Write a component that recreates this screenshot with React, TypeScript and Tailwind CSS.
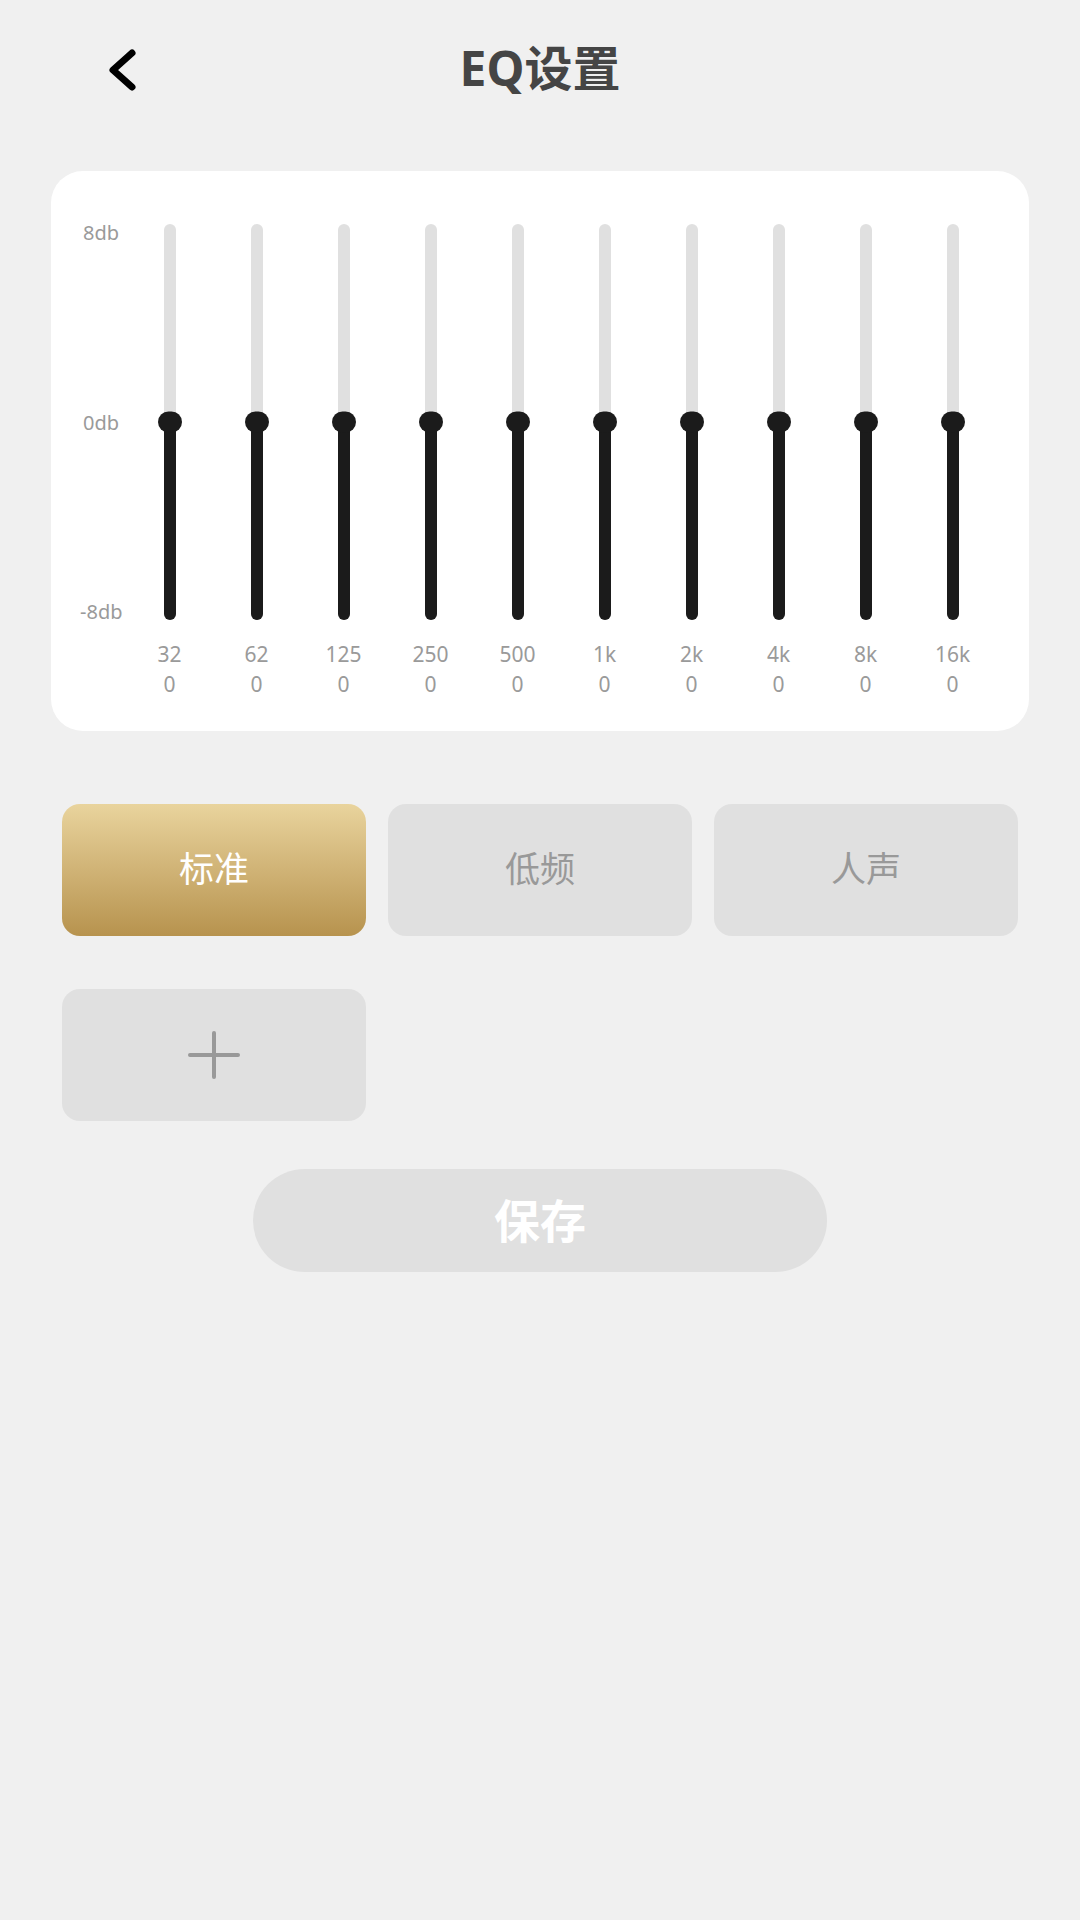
import React from "react";

const bands = ["32", "62", "125", "250", "500", "1k", "2k", "4k", "8k", "16k"];

function Slider({ label }: { label: string }) {
  return (
    <div className="flex w-[87px] flex-col items-center">
      <div className="relative mt-[3px] h-[396px] w-[12px] rounded-full bg-[#e0e0e0]">
        <div className="absolute bottom-0 left-0 h-1/2 w-full rounded-full bg-[#1b1b1b]" />
        <div className="absolute left-1/2 top-1/2 h-[21px] w-[24px] -translate-x-1/2 -translate-y-1/2 rounded-full bg-[#1b1b1b]" />
      </div>
      <div className="mt-[19px] text-center text-[21px] leading-[30px] text-[#9a9a9a]">
        <div>{label}</div>
        <div>0</div>
      </div>
    </div>
  );
}

export default function App() {
  return (
    <div
      className="min-h-[1920px] w-[1080px] bg-[#f0f0f0]"
      style={{ fontFamily: '"Noto Sans", "Noto Sans CJK SC", sans-serif' }}
    >
      {/* header */}
      <div className="relative flex h-[136px] items-center justify-center">
        <button className="absolute left-[100px] top-[44px] p-0">
          <svg width="44" height="50" viewBox="0 0 44 50" fill="none">
            <path d="M32 9 L13 26 L32 43" stroke="#000" strokeWidth="7" strokeLinecap="round" strokeLinejoin="round" />
          </svg>
        </button>
        <h1 className="text-[48px] font-bold leading-none text-[#454545]">EQ设置</h1>
      </div>

      {/* eq card */}
      <div className="mx-[51px] mt-[35px] flex h-[560px] rounded-[32px] bg-white pt-[50px]">
        <div className="flex h-[403px] w-[75px] flex-col justify-between pl-[32px] text-[20px] leading-[24px] text-[#9a9a9a]">
          <span>8db</span>
          <span>0db</span>
          <span className="-ml-[3px]">-8db</span>
        </div>
        <div className="flex">
          {bands.map((b) => (
            <Slider key={b} label={b} />
          ))}
        </div>
      </div>

      {/* presets */}
      <div className="mt-[73px] grid grid-cols-3 gap-[22px] px-[62px]">
        <button className="flex h-[132px] items-center justify-center rounded-[18px] bg-gradient-to-b from-[#e9d49d] to-[#b7934e] pb-[2px] text-[35px] text-white">
          标准
        </button>
        <button className="flex h-[132px] items-center justify-center rounded-[18px] bg-[#e0e0e0] pb-[2px] text-[35px] text-[#999]">
          低频
        </button>
        <button className="flex h-[132px] items-center justify-center rounded-[18px] bg-[#e0e0e0] pb-[2px] text-[35px] text-[#999]">
          人声
        </button>
        <button className="mt-[31px] flex h-[132px] items-center justify-center rounded-[18px] bg-[#e0e0e0]">
          <svg width="52" height="48" viewBox="0 0 52 48" fill="none">
            <path d="M26 2 V46 M2 24 H50" stroke="#999" strokeWidth="4" strokeLinecap="round" />
          </svg>
        </button>
      </div>

      {/* save */}
      <button className="mx-auto mt-[48px] flex h-[103px] w-[574px] items-center justify-center rounded-full bg-[#e0e0e0] text-[46px] font-bold text-white">
        保存
      </button>
    </div>
  );
}
